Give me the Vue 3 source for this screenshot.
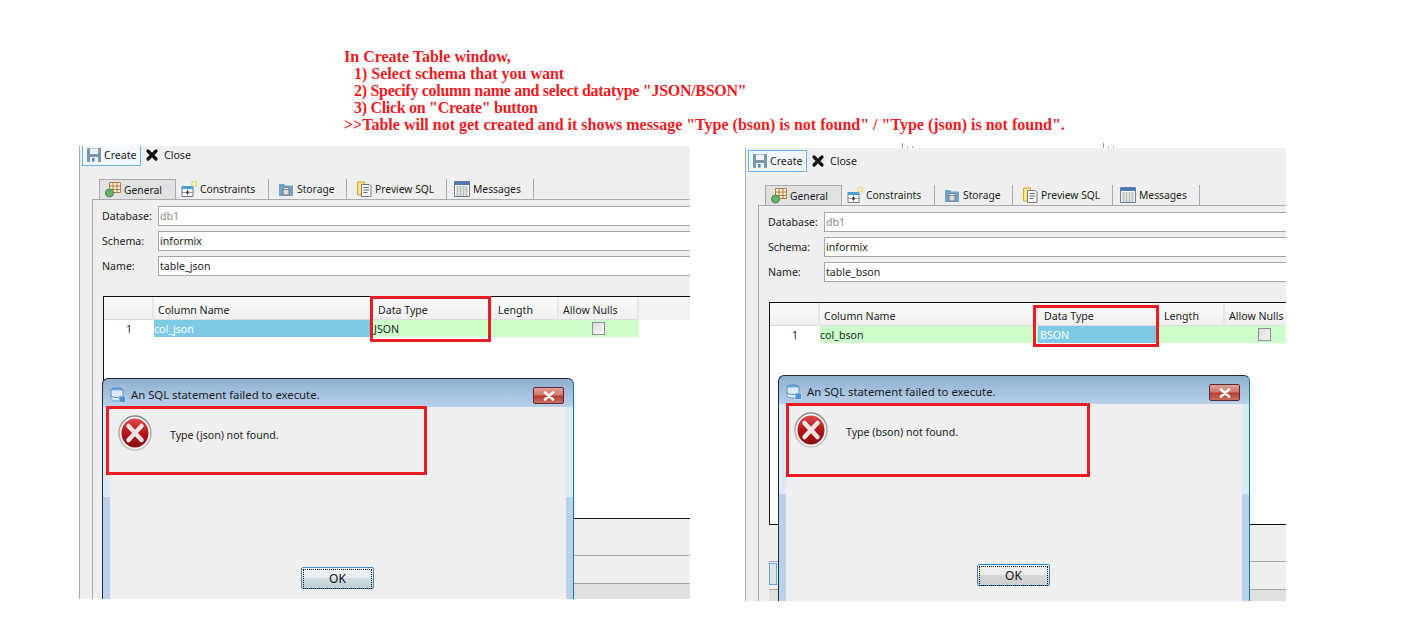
<template>
  <div class="page">
    <!-- shared icons -->
    <svg class="defs" width="0" height="0">
      <defs>
        <linearGradient id="redBall" x1="0" y1="0" x2="0" y2="1">
          <stop offset="0" stop-color="#e0484c" />
          <stop offset="0.55" stop-color="#b01217" />
          <stop offset="1" stop-color="#8a0c10" />
        </linearGradient>
        <linearGradient id="ring" x1="0" y1="0" x2="0" y2="1">
          <stop offset="0" stop-color="#8d8d8d" />
          <stop offset="1" stop-color="#c9c9c9" />
        </linearGradient>
        <symbol id="i-save" viewBox="0 0 16 16">
          <path d="M1.500 1.500h13v13h-13z" fill="#7d97ad" stroke="#7d97ad" />
          <path d="M4 1.500h8v5.500H4z" fill="#eef2f5" />
          <path d="M4 10h8v5H4z" fill="#eef2f5" />
          <path d="M6 11h2.500v3.500H6z" fill="#3f8fce" />
        </symbol>
        <symbol id="i-close" viewBox="0 0 16 16">
          <path d="M4 4l8 8M12 4l-8 8" stroke="#111" stroke-width="3.200" stroke-linecap="round" />
        </symbol>
        <symbol id="i-general" viewBox="0 0 16 16">
          <path d="M4.500 .5h11v10h-11zM4.500 4h11M4.500 7.500h11M8 .5v10M12 .5v10" fill="#fbf3e3" stroke="#b8793a" />
          <circle cx="4.500" cy="11" r="4" fill="#6ab26a" stroke="#3d8a48" />
        </symbol>
        <symbol id="i-constraints" viewBox="0 0 16 16">
          <path d="M1 5.500h11v10H1z" fill="#fff" stroke="#6a7a88" />
          <path d="M1 5h11v3H1z" fill="#4b9ed6" />
          <path d="M6.500 8v7.500M1 11.500h11" stroke="#8a98a4" />
          <path d="M5.500 10h2v3h-2z" fill="#333" />
          <path d="M11 .5h4.500V5H11z" fill="#fdf3b8" stroke="#e0d38c" />
        </symbol>
        <symbol id="i-storage" viewBox="0 0 16 16">
          <path d="M1 3h5l1.500 1.500H15V15H1z" fill="#6ea3c9" />
          <path d="M5 8.500h6V14H5z" fill="#d9dcdf" stroke="#777" />
          <path d="M6 6.500h4l1 2H5z" fill="#eee" stroke="#888" />
        </symbol>
        <symbol id="i-preview" viewBox="0 0 16 16">
          <path d="M1.500 1h7v13h-7z" fill="#fbe58a" stroke="#d9a92e" />
          <path d="M5.500 3.500h8L15 5v10.500H5.500z" fill="#f4f4f4" stroke="#7d7d7d" />
          <path d="M7.500 6.500h5.500M7.500 9h5.500M7.500 11.500h4" stroke="#6c6c6c" />
        </symbol>
        <symbol id="i-messages" viewBox="0 0 16 16">
          <path d="M.5 .5h15v15H.5z" fill="#fff" stroke="#5b7da3" />
          <path d="M1 1h14v3H1z" fill="#4a7ab5" />
          <path d="M2.500 6h11M2.500 8h11M2.500 10h11M2.500 12h11M2.500 14h11" stroke="#7a7a7a" stroke-dasharray="2 1" />
        </symbol>
        <symbol id="i-db" viewBox="0 0 16 16">
          <ellipse cx="7" cy="3.500" rx="6" ry="2.500" fill="#6fb2e6" stroke="#3d7fb5" />
          <path d="M1 3.500v8c0 1.400 2.700 2.500 6 2.500s6-1.100 6-2.500v-8" fill="#dcebf7" stroke="#5f93bd" />
          <path d="M1 8c0 1.400 2.700 2.500 6 2.500s6-1.100 6-2.500" fill="none" stroke="#4a8cc4" />
          <path d="M9 9h6.500v6.500H9z" fill="#4f93d2" stroke="#d6e8f7" stroke-width=".7" />
        </symbol>
      </defs>
    </svg>

    <div class="note">
      <div>In Create Table window,</div>
      <div class="step">1) Select schema that you want</div>
      <div class="step tight">2) Specify column name and select datatype "JSON/BSON"</div>
      <div class="step tight">3) Click on "Create" button</div>
      <div>&gt;&gt;Table will not get created and it shows message "Type (bson) is not found" / "Type (json) is not found".</div>
    </div>

    <div class="shots">
      <div v-for="s in shots" :key="s.key" class="shot" :class="'shot-' + s.key">
        <i v-if="s.key === 'bson'" class="crumb crumb-a"></i>
        <i v-if="s.key === 'bson'" class="crumb crumb-b"></i>
        <div class="frame">
          <div class="pane">
            <div class="toolbar">
              <div class="tool tool-on">
                <svg class="ico"><use href="#i-save" /></svg>
                <span>Create</span>
              </div>
              <div class="tool">
                <svg class="ico"><use href="#i-close" /></svg>
                <span>Close</span>
              </div>
            </div>

            <div class="tabs">
              <div
                v-for="t in tabs"
                :key="t.label"
                class="tab"
                :class="{ active: t.active }"
                :style="{ width: t.w + 'px', paddingLeft: t.pad + 'px' }"
              >
                <svg class="ico"><use :href="'#' + t.icon" /></svg>
                <span>{{ t.label }}</span>
              </div>
            </div>

            <div class="body">
              <div class="form">
                <label>Database:</label>
                <div class="field muted">db1</div>
                <label>Schema:</label>
                <div class="field">informix</div>
                <label>Name:</label>
                <div class="field">{{ s.table }}</div>
              </div>

              <div class="grid">
                <div class="row head">
                  <div class="cell"></div>
                  <div v-for="c in columns" :key="c" class="cell">{{ c }}</div>
                </div>
                <div class="row data">
                  <div class="cell num">1</div>
                  <div class="cell" :class="{ sel: s.sel === 'name' }">{{ s.column }}</div>
                  <div class="cell type" :class="{ sel: s.sel === 'type' }">{{ s.type }}</div>
                  <div class="cell"></div>
                  <div class="cell check"><span class="box"></span></div>
                </div>
              </div>

              <div class="lower">
                <div class="lower-row"><span class="handle"></span></div>
                <div class="lower-band"></div>
              </div>
            </div>
          </div>

          <div class="dialog">
            <div class="dlg-title">
              <svg class="ico"><use href="#i-db" /></svg>
              <span>An SQL statement failed to execute.</span>
              <div class="dlg-x">
                <svg width="14" height="10" viewBox="0 0 14 10">
                  <path d="M3 1.500l8 7M11 1.500l-8 7" stroke="#fff" stroke-width="2.600" stroke-linecap="round" />
                </svg>
              </div>
            </div>
            <div class="dlg-body">
              <div class="msg">
                <svg class="err" width="34" height="36" viewBox="0 0 34 36">
                  <ellipse cx="17" cy="18" rx="16" ry="17" fill="#f2f2f2" stroke="url(#ring)" stroke-width="1.500" />
                  <ellipse cx="17" cy="18" rx="13.500" ry="14.500" fill="url(#redBall)" />
                  <path d="M10.500 11l13 14M23.500 11l-13 14" stroke="#f1e4e4" stroke-width="4.500" stroke-linecap="round" />
                </svg>
                <span>Type ({{ s.short }}) not found.</span>
              </div>
              <button class="ok" :class="'ok-' + s.key"><span>OK</span></button>
            </div>
          </div>

          <div class="mark mark-type"></div>
          <div class="mark mark-msg"></div>
        </div>
      </div>
    </div>
  </div>
</template>

<script setup>
const columns = ['Column Name', 'Data Type', 'Length', 'Allow Nulls']

const tabs = [
  { label: 'General', icon: 'i-general', active: true, w: 77, pad: 5 },
  { label: 'Constraints', icon: 'i-constraints', w: 93, pad: 5 },
  { label: 'Storage', icon: 'i-storage', w: 78, pad: 9 },
  { label: 'Preview SQL', icon: 'i-preview', w: 100, pad: 9 },
  { label: 'Messages', icon: 'i-messages', w: 87, pad: 7 }
]

const shots = [
  { key: 'json', short: 'json', table: 'table_json', column: 'col_json', type: 'JSON', sel: 'name' },
  { key: 'bson', short: 'bson', table: 'table_bson', column: 'col_bson', type: 'BSON', sel: 'type' }
]
</script>

<style>
html, body {
  margin: 0;
  background: #fff;
}
</style>

<style scoped>
.page {
  width: 1426px;
  height: 628px;
  overflow: hidden;
  background: #fff;
  font-family: "Noto Sans", "Liberation Sans", sans-serif;
  font-size: 10.6px;
  color: #1c1c1c;
}

.defs {
  position: absolute;
}

.note {
  padding: 48px 0 0 344px;
  font-family: "Liberation Serif", serif;
  font-weight: 700;
  font-size: 16px;
  line-height: 17px;
  height: 85px;
  color: #ee1c25;
  white-space: nowrap;
}

.step {
  padding-left: 10px;
}

.tight {
  letter-spacing: -0.3px;
}

.shots {
  display: flex;
  align-items: flex-start;
  margin-top: 13px;
  padding-left: 79px;
}

.shot {
  position: relative;
}

.shot-json .frame {
  width: 611px;
}

.shot-bson {
  margin: 2px 0 0 55px;
}

.shot-bson .frame {
  width: 541px;
}

.crumb {
  position: absolute;
  top: -5px;
  width: 1px;
  height: 5px;
  background: #9a9a9a;
  box-shadow: 5px 3px 0 0 #c8a24e, 10px 3px 0 0 #aaa;
}

.crumb-a {
  left: 157px;
}

.crumb-b {
  left: 358px;
}

.frame {
  position: relative;
  height: 453px;
  overflow: hidden;
  background: #efefef;
  border-left: 1px solid #ababab;
  box-sizing: border-box;
}

.pane {
  width: 900px;
}

.shot-json .pane {
  margin-top: -2px;
}

.shot-bson .pane {
  padding-top: 2px;
}

.toolbar {
  display: flex;
  align-items: center;
  height: 22px;
  padding-left: 2px;
}

.tool {
  display: flex;
  align-items: center;
  gap: 4px;
  height: 22px;
  padding: 0 2px;
  box-sizing: border-box;
}

.tool-on {
  width: 59px;
  gap: 2px;
  padding-left: 3px;
  background: #f2f7fc;
  border: 1px solid #6ab2ee;
  margin-right: 1px;
}

.ico {
  width: 16px;
  height: 16px;
  flex: none;
}

.tabs {
  display: flex;
  height: 20px;
  margin: 13px 0 0 19px;
  font-size: 10.3px;
}

.tab {
  display: flex;
  align-items: center;
  gap: 3px;
  box-sizing: border-box;
  border-right: 1px solid #a9a9a9;
  white-space: nowrap;
}

.tab.active {
  background: #e1e1e1;
  border: 1px solid #a9a9a9;
  border-bottom: 0;
}

.body {
  margin-left: 12px;
  border-left: 1px solid #ababab;
  border-top: 1px solid #ababab;
}

.form {
  display: grid;
  grid-template-columns: 56px 760px;
  row-gap: 5px;
  align-items: center;
  padding: 6px 0 0 9px;
}

.form label {
  line-height: 20px;
}

.field {
  height: 20px;
  line-height: 18px;
  padding-left: 1px;
  background: #fff;
  border: 1px solid #a6a6a6;
  box-sizing: border-box;
}

.field.muted {
  color: #8a8a8a;
}

.grid {
  height: 223px;
  width: 800px;
  margin: 20px 0 0 10px;
  background: #fff;
  border: 1px solid #111;
  box-sizing: border-box;
}

.row {
  display: grid;
  grid-template-columns: 50px 218px 120px 67px 80px;
}

.head {
  height: 23px;
  background: #f3f3f3;
}

.head .cell {
  padding: 5px 0 0 6px;
  line-height: 17px;
  background: linear-gradient(#f7f7f7 0, #f7f7f7 40%, #efefef 100%);
  border-right: 2px solid #e6e6e6;
  border-bottom: 2px solid #dcdcdc;
  box-sizing: border-box;
}

.head .cell:nth-child(2),
.head .cell:nth-child(5) {
  padding-left: 4px;
}

.data {
  height: 17px;
  line-height: 19px;
}

.data .cell {
  height: 17px;
  background: #ccffcc;
}

.data .cell.type {
  padding-left: 2px;
}

.data .cell.num {
  background: #fff;
  text-align: center;
}

.data .cell.sel {
  background: #7ec9e6;
  color: #fff;
}

.data .check {
  display: flex;
  justify-content: center;
  align-items: center;
  padding-right: 2px;
}

.box {
  width: 11px;
  height: 11px;
  background: linear-gradient(135deg, #d8d8d8, #fafafa);
  border: 1px solid #8f8f8f;
}

.lower {
  margin-top: 36px;
  margin-left: 10px;
  border-top: 1px solid #a6a6a6;
}

.lower-row {
  height: 26px;
  border-bottom: 1px solid #a6a6a6;
}

.handle {
  display: block;
  width: 8px;
  height: 22px;
  margin-top: 1px;
  border: 1px solid #5aa9ee;
  background: #e4e4e4;
  box-sizing: border-box;
}

.lower-band {
  height: 40px;
  background: #e0e0e0;
}

.dialog {
  position: absolute;
  width: 472px;
  height: 240px;
  padding: 0 7px 6px;
  box-sizing: border-box;
  border: 1px solid #1d2b3a;
  border-right-color: #0f78a8;
  border-radius: 6px 6px 0 0;
  background: linear-gradient(#8fafd0 0, #b9d1ea 28px, #dce9f7 28px, #dce9f7 118px, #b9d1ea 118px);
}

.dlg-title {
  position: relative;
  display: flex;
  align-items: center;
  gap: 5px;
  height: 28px;
  padding-top: 3px;
  box-sizing: border-box;
  font-size: 11.3px;
  white-space: nowrap;
}

.dlg-x {
  position: absolute;
  top: 8px;
  right: 2px;
  display: flex;
  align-items: center;
  justify-content: center;
  width: 31px;
  height: 17px;
  box-sizing: border-box;
  border: 1px solid #5a2a38;
  border-radius: 2px;
  background: linear-gradient(#dca29a 0, #d2776c 48%, #b53a2c 52%, #c9705f 100%);
}

.dlg-body {
  position: relative;
  height: 205px;
  background: #efefef;
}

.msg {
  display: flex;
  align-items: center;
  gap: 18px;
  padding: 8px 0 0 8px;
}

.msg span {
  margin-top: 4px;
}

.err {
  flex: none;
}

.ok {
  position: absolute;
  left: 191px;
  top: 160px;
  width: 73px;
  height: 22px;
  padding: 1px;
  font: inherit;
  font-size: 12px;
  color: #111;
  border: 1px solid #3f8fbd;
  border-radius: 2px;
  background: linear-gradient(#eef3f5 0, #e6ecef 48%, #cfdbe2 52%, #c4d2da 100%);
}

.ok span {
  display: block;
  height: 18px;
  line-height: 18px;
  border: 1px dotted #111;
}

.ok-bson {
  border-color: #2a8ccf;
  background: linear-gradient(#f2f2f2 0, #ececec 48%, #d6d6d6 52%, #cecece 100%);
}

.mark {
  position: absolute;
  border: 3px solid #ed1c24;
  box-sizing: border-box;
}

.shot-json .dialog {
  left: 22px;
  top: 232px;
}

.shot-json .mark-type {
  left: 290px;
  top: 150px;
  width: 121px;
  height: 46px;
}

.shot-json .mark-msg {
  left: 26px;
  top: 260px;
  width: 321px;
  height: 69px;
}

.shot-bson .dialog {
  left: 32px;
  top: 227px;
  height: 227px;
}

.shot-bson .dlg-body {
  height: 198px;
}

.shot-bson .mark-type {
  left: 287px;
  top: 157px;
  width: 126px;
  height: 42px;
}

.shot-bson .mark-msg {
  left: 40px;
  top: 255px;
  width: 304px;
  height: 74px;
}
</style>
